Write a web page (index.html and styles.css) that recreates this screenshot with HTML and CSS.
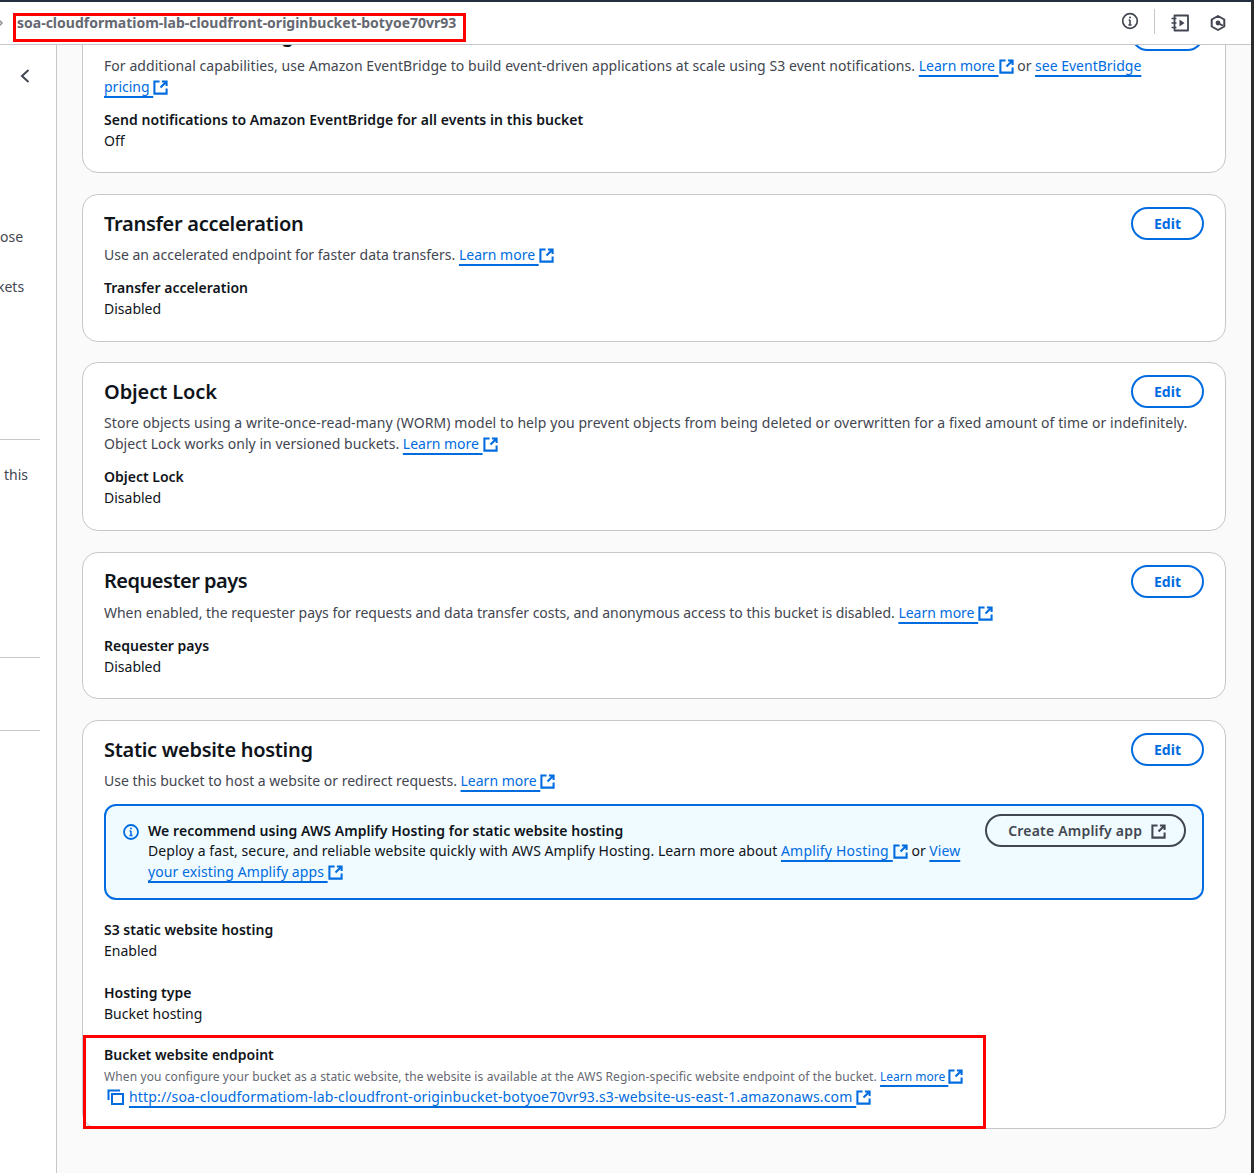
FILE: index.html
```html
<!DOCTYPE html>
<html lang="en">
<head>
<meta charset="utf-8">
<title>S3 bucket properties</title>
<link rel="stylesheet" href="styles.css">
</head>
<body>
<div class="page">
  <header class="topbar">
    <svg class="crumb-arrow" width="6" height="10" viewBox="0 0 6 10"><path d="M0 1l4 4-4 4" fill="none" stroke="#8c8c94" stroke-width="1.5"/></svg>
    <span class="bucket-name">soa-cloudformatiom-lab-cloudfront-originbucket-botyoe70vr93</span>
    <div class="tools">
      <svg class="tool-info" width="18" height="18" viewBox="0 0 18 18"><circle cx="9" cy="9" r="7.300" fill="none" stroke="#424650" stroke-width="1.700"/><path d="M9 8v5M7.400 13h3.200M7.600 8H9" fill="none" stroke="#424650" stroke-width="1.600"/><circle cx="9" cy="5.400" r="1" fill="#424650"/></svg>
      <span class="tool-sep"></span>
      <svg class="tool-book" width="18" height="18" viewBox="0 0 18 18"><path d="M3.500 1.500H17v15H3.500z" fill="none" stroke="#424650" stroke-width="1.800" stroke-linejoin="round"/><path d="M.5 4.500h5M.5 9h5M.5 13.500h5" stroke="#424650" stroke-width="1.700"/><path d="M8.500 5.500l5 3.500-5 3.500z" fill="#424650"/></svg>
      <svg class="tool-hex" width="18" height="18" viewBox="0 0 18 18"><path d="M9 2l6.300 3.500v7L9 16l-6.300-3.500v-7z" fill="none" stroke="#424650" stroke-width="2" stroke-linejoin="round"/><circle cx="9" cy="9" r="2.400" fill="#424650"/><path d="M9 9l5 2.800" stroke="#424650" stroke-width="1.800"/></svg>
    </div>
    <div class="mark mark-title"></div>
  </header>
  <div class="workspace">
    <aside class="sidebar">
      <svg class="side-chevron" width="12" height="14" viewBox="0 0 12 14"><path d="M9.500 1L3 7l6.500 6" fill="none" stroke="#424650" stroke-width="2"/></svg>
      <span class="side-text side-a">ose</span>
      <span class="side-text side-b">kets</span>
      <hr class="side-rule rule-a">
      <span class="side-text side-c">this</span>
      <hr class="side-rule rule-b">
      <hr class="side-rule rule-c">
    </aside>
    <main class="content">
      <section class="card card-events">
        <div class="card-head"><h2>Amazon EventBridge</h2><button class="edit">Edit</button></div>
        <p class="desc"><span class="fit-events">For additional capabilities, use Amazon EventBridge to build event-driven applications at scale using S3 event notifications.</span> <a href="#">Learn more <svg class="ext" viewBox="0 0 16 16"><use href="#ext"/></svg></a> or <a href="#">see EventBridge<br>pricing <svg class="ext" viewBox="0 0 16 16"><use href="#ext"/></svg></a></p>
        <dl class="field"><dt class="fit-send">Send notifications to Amazon EventBridge for all events in this bucket</dt><dd>Off</dd></dl>
      </section>
      <section class="card card-transfer">
        <div class="card-head"><h2 class="fit-title">Transfer acceleration</h2><button class="edit">Edit</button></div>
        <p class="desc">Use an accelerated endpoint for faster data transfers. <a href="#">Learn more <svg class="ext" viewBox="0 0 16 16"><use href="#ext"/></svg></a></p>
        <dl class="field"><dt>Transfer acceleration</dt><dd>Disabled</dd></dl>
      </section>
      <section class="card card-lock">
        <div class="card-head"><h2>Object Lock</h2><button class="edit">Edit</button></div>
        <p class="desc"><span class="fit-lock">Store objects using a write-once-read-many (WORM) model to help you prevent objects from being deleted or overwritten for a fixed amount of time or indefinitely.</span> <span class="fit-versioned">Object Lock works only in versioned buckets.</span> <a href="#">Learn more <svg class="ext" viewBox="0 0 16 16"><use href="#ext"/></svg></a></p>
        <dl class="field"><dt>Object Lock</dt><dd>Disabled</dd></dl>
      </section>
      <section class="card card-requester">
        <div class="card-head"><h2 class="fit-requester">Requester pays</h2><button class="edit">Edit</button></div>
        <p class="desc"><span class="fit-pays">When enabled, the requester pays for requests and data transfer costs, and anonymous access to this bucket is disabled.</span> <a href="#">Learn more <svg class="ext" viewBox="0 0 16 16"><use href="#ext"/></svg></a></p>
        <dl class="field"><dt>Requester pays</dt><dd>Disabled</dd></dl>
      </section>
      <section class="card card-hosting">
        <div class="card-head"><h2 class="fit-title">Static website hosting</h2><button class="edit">Edit</button></div>
        <p class="desc">Use this bucket to host a website or redirect requests. <a href="#">Learn more <svg class="ext" viewBox="0 0 16 16"><use href="#ext"/></svg></a></p>
        <div class="notice">
          <svg class="notice-icon" width="16" height="16" viewBox="0 0 16 16"><circle cx="8" cy="8" r="7" fill="none" stroke="#006ce0" stroke-width="1.800"/><path d="M8 7v4.500M6.500 11.500h3M6.600 7H8" fill="none" stroke="#006ce0" stroke-width="1.500"/><circle cx="8" cy="4.600" r="1" fill="#006ce0"/></svg>
          <div class="notice-body">
            <strong>We recommend using AWS Amplify Hosting for static website hosting</strong>
            <p><span class="fit-deploy">Deploy a fast, secure, and reliable website quickly with AWS Amplify Hosting. Learn more about</span> <a class="fit-hosting" href="#">Amplify Hosting <svg class="ext" viewBox="0 0 16 16"><use href="#ext"/></svg></a> or <a class="fit-view" href="#">View<br>your existing Amplify apps <svg class="ext" viewBox="0 0 16 16"><use href="#ext"/></svg></a></p>
          </div>
          <button class="amplify">Create Amplify app <svg class="ext ext-dark" viewBox="0 0 16 16"><use href="#ext"/></svg></button>
        </div>
        <dl class="field field-s3"><dt>S3 static website hosting</dt><dd>Enabled</dd></dl>
        <dl class="field field-type"><dt>Hosting type</dt><dd>Bucket hosting</dd></dl>
        <dl class="field field-endpoint">
          <dt>Bucket website endpoint</dt>
          <dd class="hint"><span class="fit-hint">When you configure your bucket as a static website, the website is available at the AWS Region-specific website endpoint of the bucket.</span> <a href="#">Learn more <svg class="ext" viewBox="0 0 16 16"><use href="#ext"/></svg></a></dd>
          <dd class="endpoint-url">
            <svg class="copy" width="18" height="16" viewBox="0 0 18 16"><path d="M1.500 11V1.500H13" fill="none" stroke="#006ce0" stroke-width="2"/><path d="M5 5h11v10H5z" fill="none" stroke="#006ce0" stroke-width="2"/></svg>
            <a class="fit-url" href="#">http://soa-cloudformatiom-lab-cloudfront-originbucket-botyoe70vr93.s3-website-us-east-1.amazonaws.com <svg class="ext" viewBox="0 0 16 16"><use href="#ext"/></svg></a>
          </dd>
        </dl>
        <div class="mark mark-endpoint"></div>
      </section>
    </main>
  </div>
</div>
<svg class="sprite" width="0" height="0"><defs><symbol id="ext" viewBox="0 0 16 16"><path d="M7 1.500H1.500v13h13V9M9.500 1.500h5v5M14.500 1.500L8 8" fill="none" stroke="currentColor" stroke-width="2.200"/></symbol></defs></svg>
</body>
</html>
```
FILE: styles.css
```css
* { box-sizing: border-box; }
html, body { margin: 0; padding: 0; height: 100%; overflow: hidden; }
body { font-family: "Noto Sans", sans-serif; font-size: 14px; line-height: 21px; color: #0f141a; background: #fafafa; }
.page { width: 1254px; height: 1173px; display: flex; flex-direction: column; overflow: hidden; border-right: 3px solid #2b2b2b; border-top: 2px solid #232f3e; }
.sprite { position: absolute; }
.topbar { position: relative; z-index: 2; flex: none; height: 43px; background: #fff; border-bottom: 1px solid #c6c6cd; display: flex; align-items: center; }
.crumb-arrow { margin-left: -2px; flex: none; }
.bucket-name { margin-left: 13px; margin-top: -2px; font-weight: 700; color: #656871; font-size: 14px; }
.tools { margin-left: auto; display: flex; align-items: center; margin-right: 24px; }
.tool-info { margin-right: 15px; margin-top: -5px; }
.tool-sep { width: 1px; height: 25px; background: #c6c6cd; margin-right: 16px; margin-top: -4px; }
.tool-book { margin-right: 20px; }
.workspace { flex: 1; display: flex; min-height: 0; }
.sidebar { flex: none; width: 57px; background: #fff; border-right: 1px solid #c6c6cd; display: flex; flex-direction: column; overflow: hidden; color: #424650; }
.side-chevron { margin: 24px 0 0 19px; flex: none; }
.side-text { flex: none; white-space: nowrap; }
.side-a { margin-top: 143px; }
.side-b { margin-top: 29px; margin-left: -3px; }
.side-c { margin-top: 24px; margin-left: 4px; }
.side-rule { width: 40px; border: 0; border-top: 1px solid #c6c6cd; margin: 0; flex: none; }
.rule-a { margin-top: 142px; }
.rule-b { margin-top: 172px; }
.rule-c { margin-top: 72px; }
.content { flex: 1; min-width: 0; padding: 0 25px; display: flex; flex-direction: column; gap: 21px; }
.card { position: relative; flex: none; background: #fff; border: 1px solid #c6c6cd; border-radius: 16px; padding: 12px 21px 22px; }
.card-events { margin-top: -40px; padding-bottom: 21px; }
.card-lock { margin-top: -1px; }
.card-requester { padding-bottom: 21px; }
.card-hosting { padding-bottom: 21px; }
.card-head { display: flex; justify-content: space-between; align-items: flex-start; height: 34px; }
h2 { margin: 1px 0 0; font-size: 20px; line-height: 32px; font-weight: 600; color: #0f141a; letter-spacing: -0.1px; }
.fit-title { letter-spacing: -0.3px; }
.fit-requester { letter-spacing: -0.5px; margin-top: 0; }
.edit { font: 700 14px/20px "Noto Sans", sans-serif; color: #006ce0; background: #fff; border: 2px solid #006ce0; border-radius: 20px; width: 73px; height: 33px; padding: 0; }
.desc { margin: 3px 0 0; color: #424650; }
.fit-events { letter-spacing: 0.057px; }
.fit-lock { letter-spacing: 0.076px; }
.fit-versioned { letter-spacing: 0.03px; }
.fit-pays { letter-spacing: -0.025px; }
.fit-deploy { letter-spacing: 0.06px; }
.fit-hosting { letter-spacing: 0.2px; }
.fit-view { letter-spacing: 0.08px; }
.fit-send { letter-spacing: 0.06px; }
.fit-hint { letter-spacing: 0.105px; }
.fit-url { letter-spacing: 0.155px; }
a { color: #006ce0; text-decoration: underline; text-underline-offset: 4px; text-decoration-thickness: 1.5px; }
.ext { width: 15px; height: 15px; vertical-align: -3px; margin-left: 0; color: #006ce0; }
.ext-dark { color: #424650; margin-left: 5px; }
.field { margin: 12px 0 0; }
dt { font-weight: 600; }
dd { margin: 0; }
.notice { margin-top: 13px; display: flex; align-items: flex-start; background: #f0fbff; border: 2px solid #006ce0; border-radius: 12px; padding: 15px 16px 16px 17px; }
.notice-icon { flex: none; margin: 3px 9px 0 0; }
.notice-body { flex: 1; min-width: 0; color: #0f141a; }
.notice-body strong { font-weight: 600; display: block; line-height: 19px; letter-spacing: 0.05px; }
.notice-body p { margin: 0; }
.amplify { flex: none; margin: -7px 0 0 20px; font: 600 14px/20px "Noto Sans", sans-serif; letter-spacing: 0.2px; color: #424650; background: transparent; border: 2px solid #424650; border-radius: 20px; height: 33px; padding: 0 18px 0 21px; }
.field-s3 { margin-top: 19px; }
.field-type { margin-top: 21px; }
.field-endpoint { margin-top: 20px; }
.hint { font-size: 12px; line-height: 21px; color: #656871; margin-top: 1px; }
.endpoint-url { display: flex; align-items: center; line-height: 20px; }
.copy { flex: none; margin: 0 4px 0 3px; }
.mark { position: absolute; border: 3px solid #f00; pointer-events: none; }
.mark-title { left: 13px; top: 11px; width: 453px; height: 29px; }
.mark-endpoint { left: 0; bottom: -1px; width: 903px; height: 94px; }
```
